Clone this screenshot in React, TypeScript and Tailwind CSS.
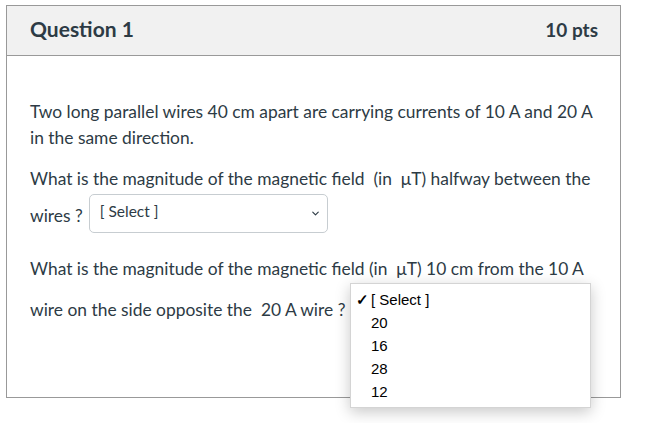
import { ChevronDown } from "lucide-react";

function SelectBox({ width, hidden }: { width: string; hidden?: boolean }) {
  return (
    <div
      className={`${width} h-[39px] ml-[6px] flex items-center justify-between rounded-[5px] border border-[#c7cdd1] bg-white pl-[10px] pr-[6px] text-[15.5px] text-[#2d3b45]`}
    >
      <span className={hidden ? "invisible -mt-[6px]" : "-mt-[6px]"}>[ Select ]</span>
      <ChevronDown className="w-[11px] h-[11px] text-[#2d3b45]" strokeWidth={2.5} />
    </div>
  );
}

export default function App() {
  const options = ["20", "16", "28", "12"];
  return (
    <div className="w-[647px] h-[423px] bg-white pt-[5px] pl-[6px] font-['Lato','Noto_Sans',sans-serif] text-[#2d3b45]">
      <div className="relative w-[615px] border border-[#999]">
        <div className="h-[50px] flex items-center justify-between bg-[#f1f1f1] border-b border-[#999] pl-[23px] pr-[22px]">
          <h2 className="text-[21px] font-bold -mt-[4px]">Question 1</h2>
          <span className="text-[19px] font-bold">10 pts</span>
        </div>
        <div className="h-[341px] pt-[43px] pl-[23px] text-[17.4px]">
          <div className="leading-[26px]">
            <div>Two long parallel wires 40 cm apart are carrying currents of 10 A and 20 A</div>
            <div>in the same direction.</div>
          </div>
          <div className="mt-[15px] leading-[26px]">
            <div>What is the magnitude of the magnetic field&nbsp; (in&nbsp; μT) halfway between the</div>
            <div className="flex items-center mt-[2px]">
              <span className="pt-[4px]">wires ?</span>
              <SelectBox width="w-[239px]" />
            </div>
          </div>
          <div className="mt-[23px] leading-[26px]">
            <div>What is the magnitude of the magnetic field (in&nbsp; μT) 10 cm from the 10 A</div>
            <div className="flex items-center mt-[6px]">
              <span className="pt-[4px]">wire on the side opposite the&nbsp; 20 A wire ?</span>
              <SelectBox width="w-[225px]" hidden />
            </div>
          </div>
        </div>
        <div className="absolute z-10 left-[343px] top-[277px] w-[241px] bg-white border border-[#d4d4d4] shadow-[0_4px_14px_rgba(0,0,0,0.22)] pt-[5px] pb-[3px] font-['Liberation_Sans',Arial,sans-serif] text-[15px] text-black">
          <div className="h-[23px] flex items-center">
            <span className="w-[20px] text-right pr-[2px] text-[15px] font-bold">✓</span>
            <span>[ Select ]</span>
          </div>
          {options.map((o) => (
            <div key={o} className="h-[23px] flex items-center pl-[20px]">
              {o}
            </div>
          ))}
        </div>
      </div>
    </div>
  );
}
